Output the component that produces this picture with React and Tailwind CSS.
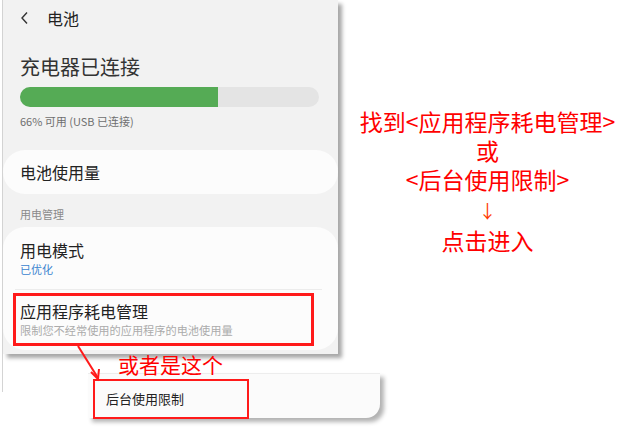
import React from "react";

const cjk = { fontFamily: '"Noto Sans CJK SC", "Noto Sans", sans-serif' };

function PhonePanel(){
    return (
        <div className="relative w-[335px] h-[354px] bg-[#f2f2f2] shadow-[4px_4px_4px_rgba(0,0,0,0.35)] flex flex-col">
            {/* header */}
            <div className="h-[36px] flex items-center pl-[17px] text-[#222]">
                <svg width="10" height="14" viewBox="0 0 10 14" className="mr-[17px]">
                    <path d="M7 1.5 L2 7 L7 12.5" fill="none" stroke="#333" strokeWidth="1.4" />
                </svg>
                <span className="text-[16px] leading-none">电池</span>
            </div>
            <div className="mt-[17px] h-[28px] leading-[28px] pl-[17px] text-[20px] text-[#333]">充电器已连接</div>
            <div className="mt-[6px] ml-[17px] w-[299px] h-[20px] rounded-full bg-[#e4e4e4] overflow-hidden">
                <div className="h-full w-[198px] bg-[#55ab55]"></div>
            </div>
            <div className="mt-[6px] h-[16px] leading-[16px] pl-[17px] text-[11px] text-[#6f6f6f]">66% 可用 (USB 已连接)</div>
            {/* usage card */}
            <div className="mt-[21px] h-[44px] rounded-[22px] bg-[#fcfcfc] flex items-center pl-[17px] text-[16px] text-[#222]">电池使用量</div>
            <div className="mt-[12px] h-[16px] leading-[16px] pl-[17px] text-[11px] text-[#8a8a8a]">用电管理</div>
            {/* power management card */}
            <div className="mt-[5px] h-[123px] rounded-[22px] bg-[#fcfcfc] pt-[13px] flex flex-col">
                <div className="h-[21px] leading-[21px] pl-[17px] text-[16px] text-[#222]">用电模式</div>
                <div className="h-[16px] leading-[16px] pl-[17px] text-[11px] text-[#3a84cf]">已优化</div>
                <div className="mt-[12px] ml-[12px] mr-[16px] h-px bg-[#ececec]"></div>
                <div className="mt-[10px] h-[22px] leading-[22px] pl-[17px] text-[16px] text-[#222]">应用程序耗电管理</div>
                <div className="h-[16px] leading-[16px] pl-[17px] text-[11.2px] text-[#ababab] whitespace-nowrap">限制您不经常使用的应用程序的电池使用量</div>
            </div>
            <div className="absolute left-[10px] top-[293px] w-[301px] h-[53px] border-[3px] border-[#ff1a1a]"></div>
        </div>
    );
}

function App(){
    return (
        <div className="relative w-[630px] h-[434px] bg-white overflow-hidden flex" style={cjk}>
            <div className="w-px ml-[2px] h-[392px] bg-[#d4d4d4] shrink-0"></div>
            <div className="relative w-[342px] shrink-0 flex flex-col">
                <PhonePanel />
                {/* popup card */}
                <div className="relative mt-[19px] ml-[85px] w-[292px] shrink-0 h-[45px] bg-[#fbfbfb] border-t border-[#ededed] shadow-[4px_4px_4px_rgba(0,0,0,0.3)] rounded-br-[14px]">
                    <div className="absolute left-[5px] top-[5px] w-[156px] h-[40px] border-[2px] border-[#ff1a1a] flex items-center pl-[11px] text-[13px] text-[#222]">后台使用限制</div>
                </div>
                {/* annotation */}
                <div className="absolute left-[115px] top-[351px] text-[21px] leading-[26px] text-[#ff0000] whitespace-nowrap">或者是这个</div>
                <svg className="absolute left-[60px] top-[344px]" width="45" height="40" viewBox="0 0 45 40">
                    <path d="M15 2 L35 34" stroke="#ff1a1a" strokeWidth="2" fill="none" />
                    <path d="M28 28 L35 35 L36 25" stroke="#ff1a1a" strokeWidth="2" fill="none" />
                </svg>
            </div>
            <div className="flex-1 flex flex-col items-center pt-[107px] text-[#ff0000] text-[23px]">
                <div className="h-[29px] leading-[29px] whitespace-nowrap">找到&lt;应用程序耗电管理&gt;</div>
                <div className="h-[29px] leading-[29px]">或</div>
                <div className="h-[29px] leading-[29px] whitespace-nowrap">&lt;后台使用限制&gt;</div>
                <div className="h-[32px] leading-[32px] text-[18px] text-[#ff3a00]">↓</div>
                <div className="h-[29px] leading-[29px]">点击进入</div>
            </div>
        </div>
    );
}

export default App;
